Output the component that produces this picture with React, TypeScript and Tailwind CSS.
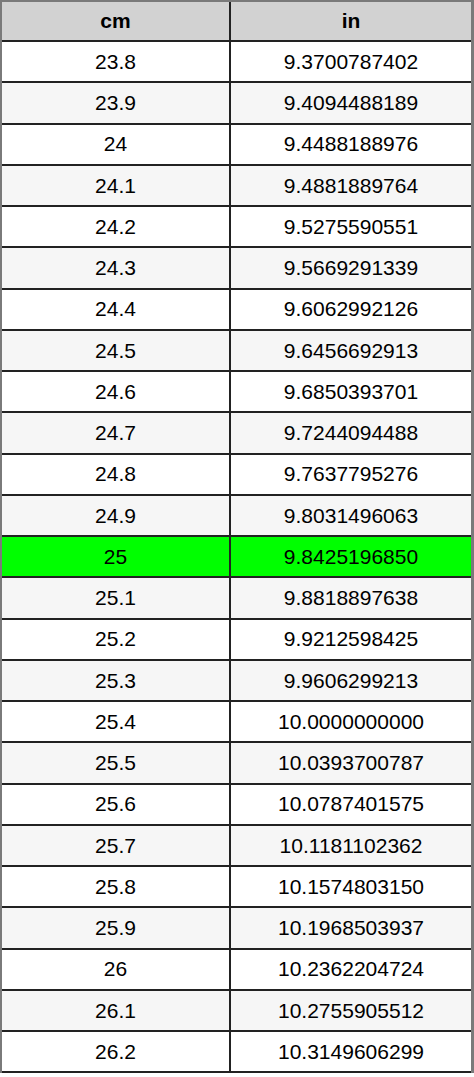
const rows: [string, string][] = [
  ["23.8", "9.3700787402"],
  ["23.9", "9.4094488189"],
  ["24", "9.4488188976"],
  ["24.1", "9.4881889764"],
  ["24.2", "9.5275590551"],
  ["24.3", "9.5669291339"],
  ["24.4", "9.6062992126"],
  ["24.5", "9.6456692913"],
  ["24.6", "9.6850393701"],
  ["24.7", "9.7244094488"],
  ["24.8", "9.7637795276"],
  ["24.9", "9.8031496063"],
  ["25", "9.8425196850"],
  ["25.1", "9.8818897638"],
  ["25.2", "9.9212598425"],
  ["25.3", "9.9606299213"],
  ["25.4", "10.0000000000"],
  ["25.5", "10.0393700787"],
  ["25.6", "10.0787401575"],
  ["25.7", "10.1181102362"],
  ["25.8", "10.1574803150"],
  ["25.9", "10.1968503937"],
  ["26", "10.2362204724"],
  ["26.1", "10.2755905512"],
  ["26.2", "10.3149606299"],
];

export default function App() {
  return (
    <div
      className="h-[1077px] w-[474px] overflow-hidden bg-white text-[21px] text-black"
      style={{ fontFamily: '"Liberation Sans", Arial, sans-serif' }}
    >
      <div className="border-t-2 border-r-[3px] border-l-2 border-[#7a7a7a]">
        <div className="flex h-[40px] border-b-2 border-[#222] bg-[#d2d2d2] font-bold">
          <div className="flex w-[229px] items-center justify-center border-r-2 border-[#222]">
            cm
          </div>
          <div className="flex flex-1 items-center justify-center">in</div>
        </div>
        {rows.map(([cm, inch], i) => {
          const bg =
            cm === "25" ? "bg-[#00ff00]" : i % 2 === 1 ? "bg-[#f6f6f6]" : "bg-white";
          return (
            <div
              key={cm}
              className={`flex h-[41.25px] items-stretch border-b-2 border-[#222] ${bg}`}
            >
              <div className="flex w-[229px] items-center justify-center border-r-2 border-[#222]">
                {cm}
              </div>
              <div className="flex flex-1 items-center justify-center">{inch}</div>
            </div>
          );
        })}
      </div>
    </div>
  );
}
